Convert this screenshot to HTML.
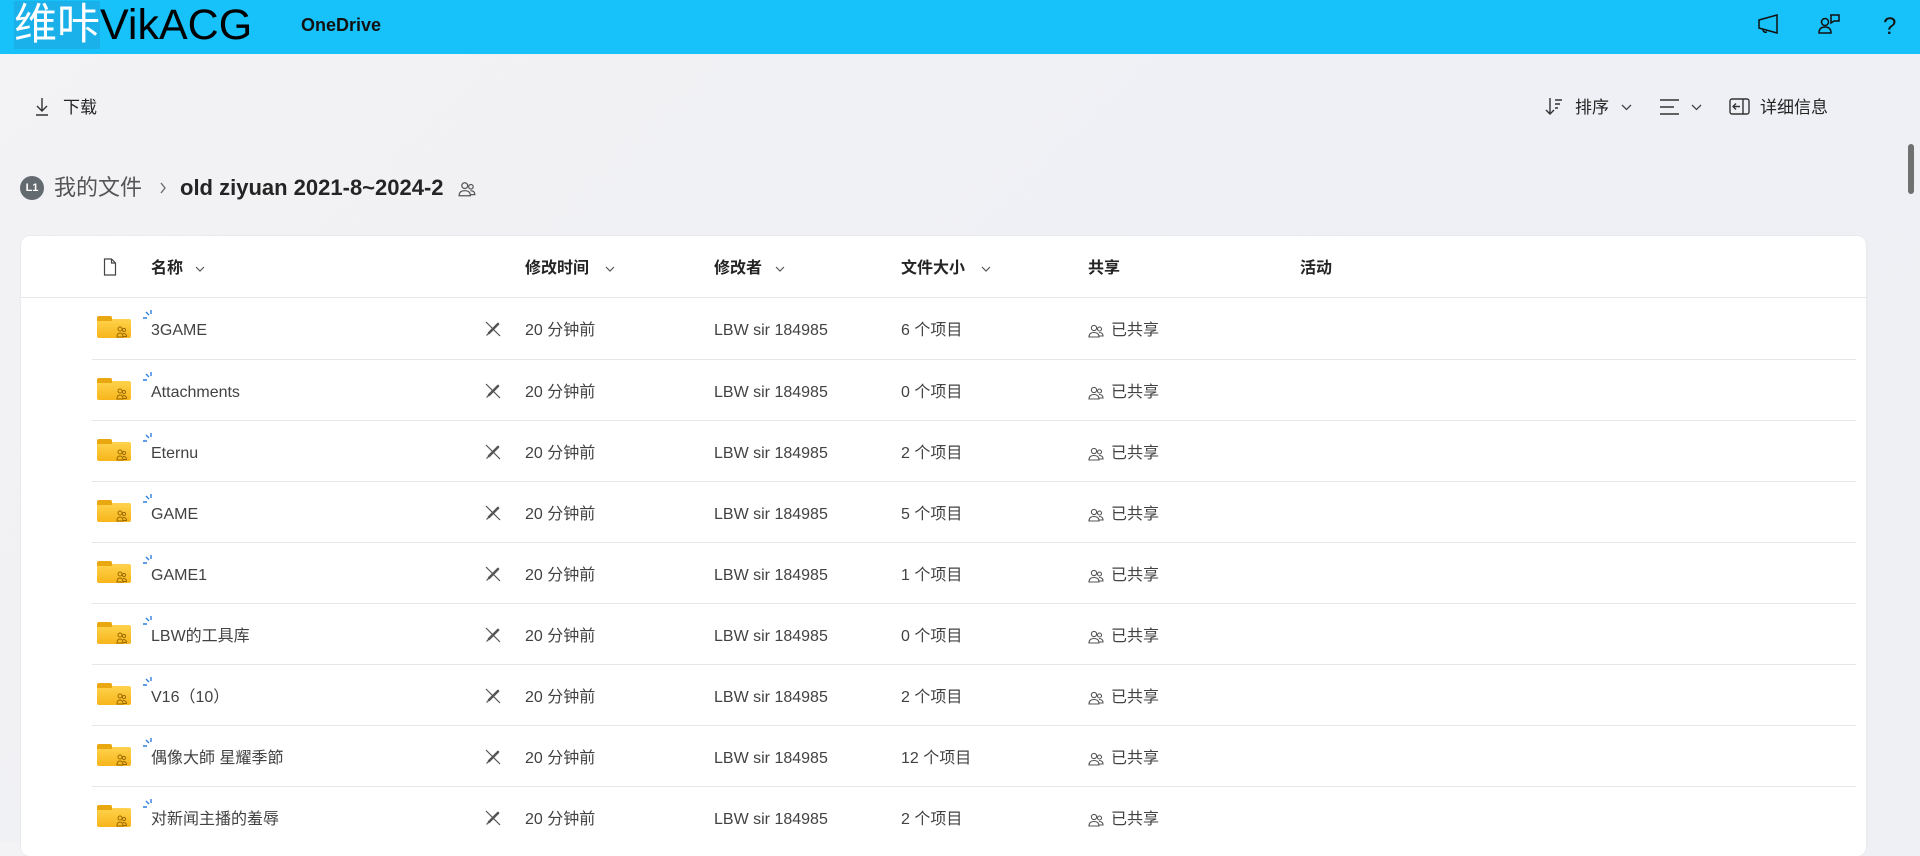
<!DOCTYPE html>
<html><head><meta charset="utf-8">
<style>
*{margin:0;padding:0;box-sizing:border-box}
body{width:1920px;height:842px;overflow:hidden;background:linear-gradient(135deg,#f3f2f4 0%,#eef0f5 60%,#eef0f4 100%);font-family:"Liberation Sans","Noto Sans CJK SC",sans-serif;color:#242424;position:relative;line-height:22px}
.hdr{position:absolute;left:0;top:0;width:1920px;height:54px;background:#17c1f9}
.logo{position:absolute;left:14px;top:3px;height:48px;font-size:43px;line-height:44px;color:#000;white-space:nowrap}
.logo .cn{background:#1ab0ea;color:#fff}
.od{position:absolute;left:301px;top:14px;font-size:18px;font-weight:bold;color:#111;line-height:22px}
.abs{position:absolute}
.tb{font-size:17px;color:#242424;line-height:22px}
.card{position:absolute;left:21px;top:236px;width:1845px;height:620px;background:#fff;border-radius:9px;box-shadow:0 0 2px rgba(0,0,0,.08)}
.th{position:absolute;top:258px;font-size:16px;font-weight:bold;color:#242424;line-height:22px}
.row{position:absolute;left:92px;width:1764px;height:61px;border-top:1px solid #e6e6e6}
.c{position:absolute;top:22px;font-size:16px;color:#424242;white-space:nowrap;line-height:22px}
.folder{position:absolute;left:5px;top:21px;width:34px;height:19px;background:linear-gradient(#ffd34d,#f7b51a);border-radius:2px}
.folder:before{content:"";position:absolute;left:0;top:-3px;width:15px;height:5px;background:#e9a80f;border-radius:2px 2px 0 0}
.scroll{position:absolute;left:1908px;top:144px;width:6px;height:50px;background:#707070;border-radius:3px}
</style></head><body>
<div class="hdr">
 <div class="logo"><span class="cn">维咔</span>VikACG</div>
 <div class="od">OneDrive</div>
 <svg class="abs" style="left:1757px;top:14px" width="24" height="22" viewBox="0 0 24 22" fill="none" stroke="#111" stroke-width="1.5"><path d="M2 6 L20 1 V19 L2 14 Z M6 15 Q6 19 10 18"/></svg>
 <svg class="abs" style="left:1818px;top:13px" width="24" height="24" viewBox="0 0 24 24" fill="none" stroke="#111" stroke-width="1.5"><circle cx="7" cy="9" r="3.5"/><path d="M1 20 Q1 14 7 14 Q13 14 13 20 Z"/><path d="M12 2 H21 V8 H16 L13 10 V2"/></svg>
 <div class="abs" style="left:1883px;top:14px;font-size:24px;color:#111;line-height:26px">?</div>
</div>

<svg class="abs" style="left:34px;top:97px" width="16" height="20" viewBox="0 0 16 20" fill="none" stroke="#333" stroke-width="1.4"><path d="M8 1 V14 M3 9 L8 14 L13 9 M2 18 H14"/></svg>
<div class="abs tb" style="left:63px;top:97px">下载</div>

<svg class="abs" style="left:1545px;top:97px" width="18" height="20" viewBox="0 0 18 20" fill="none" stroke="#333" stroke-width="1.4"><path d="M5 1 V17 M1 13 L5 17 L9 13 M10 3 H17 M10 7 H15 M10 11 H13"/></svg>
<div class="abs tb" style="left:1575px;top:97px">排序</div>
<svg class="abs" style="left:1621px;top:104px" width="11" height="7" viewBox="0 0 11 7" fill="none" stroke="#444" stroke-width="1.3"><path d="M1 1 L5.5 5.5 L10 1"/></svg>
<svg class="abs" style="left:1659px;top:99px" width="22" height="16" viewBox="0 0 22 16" fill="none" stroke="#333" stroke-width="1.4"><path d="M1 1 H20 M1 8 H15 M1 15 H20"/></svg>
<svg class="abs" style="left:1691px;top:104px" width="11" height="7" viewBox="0 0 11 7" fill="none" stroke="#444" stroke-width="1.3"><path d="M1 1 L5.5 5.5 L10 1"/></svg>
<svg class="abs" style="left:1729px;top:98px" width="21" height="17" viewBox="0 0 21 17" fill="none" stroke="#333" stroke-width="1.4"><rect x="1" y="1" width="19" height="15" rx="2"/><path d="M14 1 V16 M11 8.5 H4 M7 5.5 L4 8.5 L7 11.5"/></svg>
<div class="abs tb" style="left:1760px;top:97px">详细信息</div>

<div class="abs" style="left:20px;top:176px;width:24px;height:24px;border-radius:50%;background:#636b70;color:#fff;font-size:11px;font-weight:bold;line-height:24px;text-align:center">L1</div>
<div class="abs" style="left:54px;top:173px;font-size:22px;color:#555;line-height:30px">我的文件</div>
<svg class="abs" style="left:159px;top:182px" width="8" height="12" viewBox="0 0 8 12" fill="none" stroke="#666" stroke-width="1.3"><path d="M2 1 L6 6 L2 11"/></svg>
<div class="abs" style="left:180px;top:173px;font-size:22px;font-weight:bold;color:#242424;line-height:30px;white-space:nowrap">old ziyuan 2021-8~2024-2</div>
<svg class="abs" style="left:458px;top:180px" width="18" height="18" viewBox="0 0 16 16" fill="none" stroke="#555" stroke-width="1.1"><circle cx="6" cy="5" r="2.6"/><circle cx="11.5" cy="6" r="2"/><path d="M1 14 Q1 9.5 6 9.5 Q11 9.5 11 14 Z M11 9.5 Q15 9.5 15 13 H11"/></svg>

<div class="scroll"></div>

<div class="card"></div>
<svg class="abs" style="left:103px;top:258px" width="14" height="18" viewBox="0 0 14 18" fill="none" stroke="#444" stroke-width="1.2"><path d="M1.5 1 H8.5 L12.5 5 V17 H1.5 Z M8.5 1 V5 H12.5"/></svg>
<div class="th" style="left:151px">名称</div>
<svg class="abs" style="left:195px;top:266px" width="10" height="6" viewBox="0 0 10 6" fill="none" stroke="#555" stroke-width="1.2"><path d="M1 1 L5 5 L9 1"/></svg>
<div class="th" style="left:525px">修改时间</div>
<svg class="abs" style="left:605px;top:266px" width="10" height="6" viewBox="0 0 10 6" fill="none" stroke="#555" stroke-width="1.2"><path d="M1 1 L5 5 L9 1"/></svg>
<div class="th" style="left:714px">修改者</div>
<svg class="abs" style="left:775px;top:266px" width="10" height="6" viewBox="0 0 10 6" fill="none" stroke="#555" stroke-width="1.2"><path d="M1 1 L5 5 L9 1"/></svg>
<div class="th" style="left:901px">文件大小</div>
<svg class="abs" style="left:981px;top:266px" width="10" height="6" viewBox="0 0 10 6" fill="none" stroke="#555" stroke-width="1.2"><path d="M1 1 L5 5 L9 1"/></svg>
<div class="th" style="left:1088px">共享</div>
<div class="th" style="left:1300px">活动</div>
<div class="abs" style="left:21px;top:297px;width:1845px;height:1px;background:#e6e6e6"></div>

<div class="row" style="top:298px;border-top:none"><div class="folder"></div><svg class="abs" style="left:6px;top:25px" width="34" height="16"><g transform="translate(19,3)" fill="none" stroke="#9a6a00" stroke-width="1"><circle cx="3" cy="3" r="2"/><circle cx="7" cy="4" r="1.6"/><path d="M0 11 Q0 7 3 7 Q6 7 6 11 Z M6 7.5 Q9.5 7.5 9.5 10.5 H6"/></g></svg><svg class="abs" style="left:50px;top:12px" width="12" height="10"><path d="M1 8 H5 M4 2 L7 5 M9 0 V4" stroke="#2f7fe0" stroke-width="1.4"/></svg><div class="c" style="left:59px">3GAME</div><svg class="abs" style="left:392px;top:22px" width="18" height="18" viewBox="0 0 18 18"><path d="M5 13 L14 4" stroke="#555" stroke-width="2.6" stroke-linecap="round"/><path d="M2.5 15.5 L5 13" stroke="#555" stroke-width="1.2"/><path d="M2 2 L16 16" stroke="#555" stroke-width="1.2"/></svg><div class="c" style="left:433px">20 分钟前</div><div class="c" style="left:622px">LBW sir 184985</div><div class="c" style="left:809px">6 个项目</div><svg class="abs" style="left:996px;top:25px" width="16" height="16" viewBox="0 0 16 16" fill="none" stroke="#555" stroke-width="1.1"><circle cx="6" cy="5" r="2.6"/><circle cx="11.5" cy="6" r="2"/><path d="M1 14 Q1 9.5 6 9.5 Q11 9.5 11 14 Z M11 9.5 Q15 9.5 15 13 H11"/></svg><div class="c" style="left:1019px">已共享</div></div>
<div class="row" style="top:359px"><div class="folder"></div><svg class="abs" style="left:6px;top:25px" width="34" height="16"><g transform="translate(19,3)" fill="none" stroke="#9a6a00" stroke-width="1"><circle cx="3" cy="3" r="2"/><circle cx="7" cy="4" r="1.6"/><path d="M0 11 Q0 7 3 7 Q6 7 6 11 Z M6 7.5 Q9.5 7.5 9.5 10.5 H6"/></g></svg><svg class="abs" style="left:50px;top:12px" width="12" height="10"><path d="M1 8 H5 M4 2 L7 5 M9 0 V4" stroke="#2f7fe0" stroke-width="1.4"/></svg><div class="c" style="left:59px">Attachments</div><svg class="abs" style="left:392px;top:22px" width="18" height="18" viewBox="0 0 18 18"><path d="M5 13 L14 4" stroke="#555" stroke-width="2.6" stroke-linecap="round"/><path d="M2.5 15.5 L5 13" stroke="#555" stroke-width="1.2"/><path d="M2 2 L16 16" stroke="#555" stroke-width="1.2"/></svg><div class="c" style="left:433px">20 分钟前</div><div class="c" style="left:622px">LBW sir 184985</div><div class="c" style="left:809px">0 个项目</div><svg class="abs" style="left:996px;top:25px" width="16" height="16" viewBox="0 0 16 16" fill="none" stroke="#555" stroke-width="1.1"><circle cx="6" cy="5" r="2.6"/><circle cx="11.5" cy="6" r="2"/><path d="M1 14 Q1 9.5 6 9.5 Q11 9.5 11 14 Z M11 9.5 Q15 9.5 15 13 H11"/></svg><div class="c" style="left:1019px">已共享</div></div>
<div class="row" style="top:420px"><div class="folder"></div><svg class="abs" style="left:6px;top:25px" width="34" height="16"><g transform="translate(19,3)" fill="none" stroke="#9a6a00" stroke-width="1"><circle cx="3" cy="3" r="2"/><circle cx="7" cy="4" r="1.6"/><path d="M0 11 Q0 7 3 7 Q6 7 6 11 Z M6 7.5 Q9.5 7.5 9.5 10.5 H6"/></g></svg><svg class="abs" style="left:50px;top:12px" width="12" height="10"><path d="M1 8 H5 M4 2 L7 5 M9 0 V4" stroke="#2f7fe0" stroke-width="1.4"/></svg><div class="c" style="left:59px">Eternu</div><svg class="abs" style="left:392px;top:22px" width="18" height="18" viewBox="0 0 18 18"><path d="M5 13 L14 4" stroke="#555" stroke-width="2.6" stroke-linecap="round"/><path d="M2.5 15.5 L5 13" stroke="#555" stroke-width="1.2"/><path d="M2 2 L16 16" stroke="#555" stroke-width="1.2"/></svg><div class="c" style="left:433px">20 分钟前</div><div class="c" style="left:622px">LBW sir 184985</div><div class="c" style="left:809px">2 个项目</div><svg class="abs" style="left:996px;top:25px" width="16" height="16" viewBox="0 0 16 16" fill="none" stroke="#555" stroke-width="1.1"><circle cx="6" cy="5" r="2.6"/><circle cx="11.5" cy="6" r="2"/><path d="M1 14 Q1 9.5 6 9.5 Q11 9.5 11 14 Z M11 9.5 Q15 9.5 15 13 H11"/></svg><div class="c" style="left:1019px">已共享</div></div>
<div class="row" style="top:481px"><div class="folder"></div><svg class="abs" style="left:6px;top:25px" width="34" height="16"><g transform="translate(19,3)" fill="none" stroke="#9a6a00" stroke-width="1"><circle cx="3" cy="3" r="2"/><circle cx="7" cy="4" r="1.6"/><path d="M0 11 Q0 7 3 7 Q6 7 6 11 Z M6 7.5 Q9.5 7.5 9.5 10.5 H6"/></g></svg><svg class="abs" style="left:50px;top:12px" width="12" height="10"><path d="M1 8 H5 M4 2 L7 5 M9 0 V4" stroke="#2f7fe0" stroke-width="1.4"/></svg><div class="c" style="left:59px">GAME</div><svg class="abs" style="left:392px;top:22px" width="18" height="18" viewBox="0 0 18 18"><path d="M5 13 L14 4" stroke="#555" stroke-width="2.6" stroke-linecap="round"/><path d="M2.5 15.5 L5 13" stroke="#555" stroke-width="1.2"/><path d="M2 2 L16 16" stroke="#555" stroke-width="1.2"/></svg><div class="c" style="left:433px">20 分钟前</div><div class="c" style="left:622px">LBW sir 184985</div><div class="c" style="left:809px">5 个项目</div><svg class="abs" style="left:996px;top:25px" width="16" height="16" viewBox="0 0 16 16" fill="none" stroke="#555" stroke-width="1.1"><circle cx="6" cy="5" r="2.6"/><circle cx="11.5" cy="6" r="2"/><path d="M1 14 Q1 9.5 6 9.5 Q11 9.5 11 14 Z M11 9.5 Q15 9.5 15 13 H11"/></svg><div class="c" style="left:1019px">已共享</div></div>
<div class="row" style="top:542px"><div class="folder"></div><svg class="abs" style="left:6px;top:25px" width="34" height="16"><g transform="translate(19,3)" fill="none" stroke="#9a6a00" stroke-width="1"><circle cx="3" cy="3" r="2"/><circle cx="7" cy="4" r="1.6"/><path d="M0 11 Q0 7 3 7 Q6 7 6 11 Z M6 7.5 Q9.5 7.5 9.5 10.5 H6"/></g></svg><svg class="abs" style="left:50px;top:12px" width="12" height="10"><path d="M1 8 H5 M4 2 L7 5 M9 0 V4" stroke="#2f7fe0" stroke-width="1.4"/></svg><div class="c" style="left:59px">GAME1</div><svg class="abs" style="left:392px;top:22px" width="18" height="18" viewBox="0 0 18 18"><path d="M5 13 L14 4" stroke="#555" stroke-width="2.6" stroke-linecap="round"/><path d="M2.5 15.5 L5 13" stroke="#555" stroke-width="1.2"/><path d="M2 2 L16 16" stroke="#555" stroke-width="1.2"/></svg><div class="c" style="left:433px">20 分钟前</div><div class="c" style="left:622px">LBW sir 184985</div><div class="c" style="left:809px">1 个项目</div><svg class="abs" style="left:996px;top:25px" width="16" height="16" viewBox="0 0 16 16" fill="none" stroke="#555" stroke-width="1.1"><circle cx="6" cy="5" r="2.6"/><circle cx="11.5" cy="6" r="2"/><path d="M1 14 Q1 9.5 6 9.5 Q11 9.5 11 14 Z M11 9.5 Q15 9.5 15 13 H11"/></svg><div class="c" style="left:1019px">已共享</div></div>
<div class="row" style="top:603px"><div class="folder"></div><svg class="abs" style="left:6px;top:25px" width="34" height="16"><g transform="translate(19,3)" fill="none" stroke="#9a6a00" stroke-width="1"><circle cx="3" cy="3" r="2"/><circle cx="7" cy="4" r="1.6"/><path d="M0 11 Q0 7 3 7 Q6 7 6 11 Z M6 7.5 Q9.5 7.5 9.5 10.5 H6"/></g></svg><svg class="abs" style="left:50px;top:12px" width="12" height="10"><path d="M1 8 H5 M4 2 L7 5 M9 0 V4" stroke="#2f7fe0" stroke-width="1.4"/></svg><div class="c" style="left:59px">LBW的工具库</div><svg class="abs" style="left:392px;top:22px" width="18" height="18" viewBox="0 0 18 18"><path d="M5 13 L14 4" stroke="#555" stroke-width="2.6" stroke-linecap="round"/><path d="M2.5 15.5 L5 13" stroke="#555" stroke-width="1.2"/><path d="M2 2 L16 16" stroke="#555" stroke-width="1.2"/></svg><div class="c" style="left:433px">20 分钟前</div><div class="c" style="left:622px">LBW sir 184985</div><div class="c" style="left:809px">0 个项目</div><svg class="abs" style="left:996px;top:25px" width="16" height="16" viewBox="0 0 16 16" fill="none" stroke="#555" stroke-width="1.1"><circle cx="6" cy="5" r="2.6"/><circle cx="11.5" cy="6" r="2"/><path d="M1 14 Q1 9.5 6 9.5 Q11 9.5 11 14 Z M11 9.5 Q15 9.5 15 13 H11"/></svg><div class="c" style="left:1019px">已共享</div></div>
<div class="row" style="top:664px"><div class="folder"></div><svg class="abs" style="left:6px;top:25px" width="34" height="16"><g transform="translate(19,3)" fill="none" stroke="#9a6a00" stroke-width="1"><circle cx="3" cy="3" r="2"/><circle cx="7" cy="4" r="1.6"/><path d="M0 11 Q0 7 3 7 Q6 7 6 11 Z M6 7.5 Q9.5 7.5 9.5 10.5 H6"/></g></svg><svg class="abs" style="left:50px;top:12px" width="12" height="10"><path d="M1 8 H5 M4 2 L7 5 M9 0 V4" stroke="#2f7fe0" stroke-width="1.4"/></svg><div class="c" style="left:59px">V16（10）</div><svg class="abs" style="left:392px;top:22px" width="18" height="18" viewBox="0 0 18 18"><path d="M5 13 L14 4" stroke="#555" stroke-width="2.6" stroke-linecap="round"/><path d="M2.5 15.5 L5 13" stroke="#555" stroke-width="1.2"/><path d="M2 2 L16 16" stroke="#555" stroke-width="1.2"/></svg><div class="c" style="left:433px">20 分钟前</div><div class="c" style="left:622px">LBW sir 184985</div><div class="c" style="left:809px">2 个项目</div><svg class="abs" style="left:996px;top:25px" width="16" height="16" viewBox="0 0 16 16" fill="none" stroke="#555" stroke-width="1.1"><circle cx="6" cy="5" r="2.6"/><circle cx="11.5" cy="6" r="2"/><path d="M1 14 Q1 9.5 6 9.5 Q11 9.5 11 14 Z M11 9.5 Q15 9.5 15 13 H11"/></svg><div class="c" style="left:1019px">已共享</div></div>
<div class="row" style="top:725px"><div class="folder"></div><svg class="abs" style="left:6px;top:25px" width="34" height="16"><g transform="translate(19,3)" fill="none" stroke="#9a6a00" stroke-width="1"><circle cx="3" cy="3" r="2"/><circle cx="7" cy="4" r="1.6"/><path d="M0 11 Q0 7 3 7 Q6 7 6 11 Z M6 7.5 Q9.5 7.5 9.5 10.5 H6"/></g></svg><svg class="abs" style="left:50px;top:12px" width="12" height="10"><path d="M1 8 H5 M4 2 L7 5 M9 0 V4" stroke="#2f7fe0" stroke-width="1.4"/></svg><div class="c" style="left:59px">偶像大師 星耀季節</div><svg class="abs" style="left:392px;top:22px" width="18" height="18" viewBox="0 0 18 18"><path d="M5 13 L14 4" stroke="#555" stroke-width="2.6" stroke-linecap="round"/><path d="M2.5 15.5 L5 13" stroke="#555" stroke-width="1.2"/><path d="M2 2 L16 16" stroke="#555" stroke-width="1.2"/></svg><div class="c" style="left:433px">20 分钟前</div><div class="c" style="left:622px">LBW sir 184985</div><div class="c" style="left:809px">12 个项目</div><svg class="abs" style="left:996px;top:25px" width="16" height="16" viewBox="0 0 16 16" fill="none" stroke="#555" stroke-width="1.1"><circle cx="6" cy="5" r="2.6"/><circle cx="11.5" cy="6" r="2"/><path d="M1 14 Q1 9.5 6 9.5 Q11 9.5 11 14 Z M11 9.5 Q15 9.5 15 13 H11"/></svg><div class="c" style="left:1019px">已共享</div></div>
<div class="row" style="top:786px"><div class="folder"></div><svg class="abs" style="left:6px;top:25px" width="34" height="16"><g transform="translate(19,3)" fill="none" stroke="#9a6a00" stroke-width="1"><circle cx="3" cy="3" r="2"/><circle cx="7" cy="4" r="1.6"/><path d="M0 11 Q0 7 3 7 Q6 7 6 11 Z M6 7.5 Q9.5 7.5 9.5 10.5 H6"/></g></svg><svg class="abs" style="left:50px;top:12px" width="12" height="10"><path d="M1 8 H5 M4 2 L7 5 M9 0 V4" stroke="#2f7fe0" stroke-width="1.4"/></svg><div class="c" style="left:59px">对新闻主播的羞辱</div><svg class="abs" style="left:392px;top:22px" width="18" height="18" viewBox="0 0 18 18"><path d="M5 13 L14 4" stroke="#555" stroke-width="2.6" stroke-linecap="round"/><path d="M2.5 15.5 L5 13" stroke="#555" stroke-width="1.2"/><path d="M2 2 L16 16" stroke="#555" stroke-width="1.2"/></svg><div class="c" style="left:433px">20 分钟前</div><div class="c" style="left:622px">LBW sir 184985</div><div class="c" style="left:809px">2 个项目</div><svg class="abs" style="left:996px;top:25px" width="16" height="16" viewBox="0 0 16 16" fill="none" stroke="#555" stroke-width="1.1"><circle cx="6" cy="5" r="2.6"/><circle cx="11.5" cy="6" r="2"/><path d="M1 14 Q1 9.5 6 9.5 Q11 9.5 11 14 Z M11 9.5 Q15 9.5 15 13 H11"/></svg><div class="c" style="left:1019px">已共享</div></div>
</body></html>
